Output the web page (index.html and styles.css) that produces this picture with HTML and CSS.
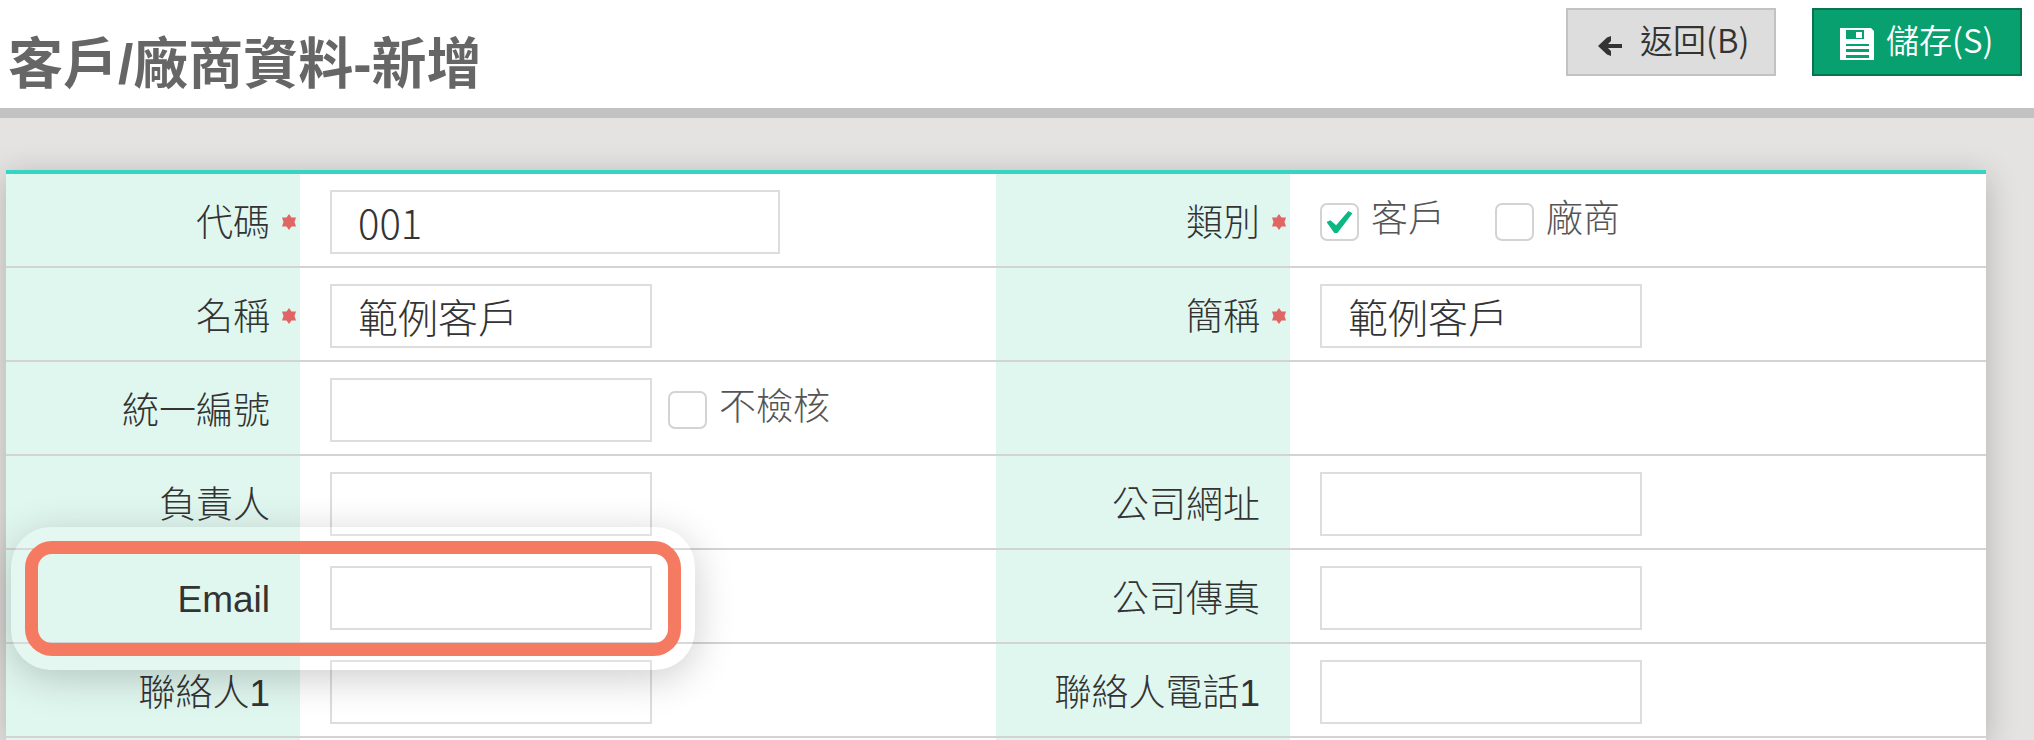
FILE: index.html
```html
<!DOCTYPE html>
<html lang="zh-Hant">
<head>
<meta charset="utf-8">
<meta name="viewport" content="width=device-width, initial-scale=1">
<title>客戶/廠商資料-新增</title>
<link rel="stylesheet" href="styles.css">
</head>
<body>
<svg class="defs" aria-hidden="true">
  <symbol id="star" viewBox="0 0 16 16"><path d="M8 0 10.500 3.500H15L13.500 8 15 12.500H10.500L8 16 5.500 12.500H1L2.500 8 1 3.500H5.500z" fill="currentColor"/></symbol>
</svg>
<header class="topbar">
  <h1 class="title">客戶/廠商資料-新增</h1>
  <div class="actions">
    <button type="button" class="btn btn-back">
      <svg class="icon-back" viewBox="0 0 24 20" aria-hidden="true"><path d="M0 10 9 1.500 13 0v5L10 8h14v4H10l3 3v5l-4-1.500z" fill="currentColor"/></svg>
      <span>返回(B)</span>
    </button>
    <button type="submit" form="customer" class="btn btn-save">
      <svg class="icon-save" viewBox="0 0 34 32" aria-hidden="true"><path fill="currentColor" fill-rule="evenodd" d="M0 0h31l3 3v29h-5V16H6v16H0zM6 2v9h18V2zM16 4h6v6h-6zM6 18h23v3H6zM6 24h23v3H6zM6 30h23v2H6z"/></svg>
      <span>儲存(S)</span>
    </button>
  </div>
</header>
<form class="panel" id="customer">
  <table class="fields">
    <colgroup><col class="col-label"><col><col class="col-label"><col></colgroup>
    <tbody>
      <tr>
        <th><div class="label"><label for="code">代碼</label><span class="mark"><svg><use href="#star"/></svg></span></div></th>
        <td><div class="cell"><input class="text wide" id="code" type="text" value="001"></div></td>
        <th><div class="label"><span>類別</span><span class="mark"><svg><use href="#star"/></svg></span></div></th>
        <td><div class="cell kinds"><label class="check"><input type="checkbox" checked><span>客戶</span></label><label class="check"><input type="checkbox"><span>廠商</span></label></div></td>
      </tr>
      <tr>
        <th><div class="label"><label for="name">名稱</label><span class="mark"><svg><use href="#star"/></svg></span></div></th>
        <td><div class="cell"><input class="text" id="name" type="text" value="範例客戶"></div></td>
        <th><div class="label"><label for="short">簡稱</label><span class="mark"><svg><use href="#star"/></svg></span></div></th>
        <td><div class="cell"><input class="text" id="short" type="text" value="範例客戶"></div></td>
      </tr>
      <tr>
        <th><div class="label"><label for="taxid">統一編號</label><span class="mark"></span></div></th>
        <td><div class="cell"><input class="text" id="taxid" type="text"><label class="check"><input type="checkbox"><span>不檢核</span></label></div></td>
        <th></th>
        <td></td>
      </tr>
      <tr>
        <th><div class="label"><label for="owner">負責人</label><span class="mark"></span></div></th>
        <td><div class="cell"><input class="text" id="owner" type="text"></div></td>
        <th><div class="label"><label for="site">公司網址</label><span class="mark"></span></div></th>
        <td><div class="cell"><input class="text" id="site" type="text"></div></td>
      </tr>
      <tr>
        <th class="anchor"><div class="label"><label for="email">Email</label><span class="mark"></span></div><div class="spotlight"></div></th>
        <td><div class="cell"><input class="text" id="email" type="email"></div></td>
        <th><div class="label"><label for="fax">公司傳真</label><span class="mark"></span></div></th>
        <td><div class="cell"><input class="text" id="fax" type="text"></div></td>
      </tr>
      <tr>
        <th><div class="label"><label for="contact">聯絡人1</label><span class="mark"></span></div></th>
        <td><div class="cell"><input class="text" id="contact" type="text"></div></td>
        <th><div class="label"><label for="phone">聯絡人電話1</label><span class="mark"></span></div></th>
        <td><div class="cell"><input class="text" id="phone" type="text"></div></td>
      </tr>
      <tr class="tail"><th></th><td></td><th></th><td></td></tr>
    </tbody>
  </table>
</form>
</body>
</html>
```
FILE: styles.css
```css
* { box-sizing: border-box; }

body {
  margin: 0;
  min-height: 100vh;
  overflow: hidden;
  background: #e4e3e1;
  color: #333;
  font-family: "Liberation Sans", "Noto Sans CJK TC", sans-serif;
}

.defs { display: none; }

.topbar {
  display: flex;
  justify-content: space-between;
  align-items: flex-start;
  height: 118px;
  padding: 8px 12px 0 8px;
  background: #fff;
  border-bottom: 10px solid #c2c2c2;
}

.title {
  margin: 16px 0 0;
  font-size: 55px;
  line-height: 80px;
  font-weight: 700;
  color: #666;
}

.actions { display: flex; gap: 36px; }

.btn {
  display: flex;
  align-items: center;
  width: 210px;
  height: 68px;
  padding: 0 0 0 30px;
  border: 2px solid #c2c2c2;
  background: #ddd;
  color: #333;
  font-family: "Noto Sans CJK TC", sans-serif;
  font-size: 33px;
  font-weight: 350;
  line-height: 60px;
}

.btn span { padding-bottom: 6px; }

.btn-back { gap: 18px; }

.btn-save {
  gap: 12px;
  padding-left: 26px;
  border-color: #08734f;
  background: #09a06f;
  color: #fff;
}

.icon-back { width: 24px; height: 20px; margin-top: 8px; }
.icon-save { width: 34px; height: 32px; margin-top: 4px; }

.panel {
  margin: 52px 48px 0 6px;
  border-top: 4px solid #35d5c3;
  background: #fff;
  box-shadow: 0 6px 30px rgba(0, 0, 0, .22);
}

.fields {
  width: 100%;
  table-layout: fixed;
  border-collapse: separate;
  border-spacing: 0;
}

.col-label { width: 294px; }

th, td {
  height: 94px;
  padding: 4px 0 0;
  border-bottom: 2px solid #d3d3d3;
}

th {
  background: #e0f7ef;
  font-weight: 300;
}

.tail th, .tail td { height: 2px; padding: 0; border: 0; }

.label {
  display: flex;
  align-items: center;
  justify-content: flex-end;
  font-size: 37px;
  line-height: 56px;
}

.label > :first-child { padding-top: 4px; }

.mark { display: flex; width: 30px; padding-left: 11px; color: #e06666; }
.mark svg { width: 16px; height: 16px; }

.cell { display: flex; align-items: center; gap: 16px; padding: 0 30px; }

.kinds { gap: 50px; }

.text {
  width: 322px;
  height: 64px;
  padding: 0 26px;
  border: 2px solid #ddd;
  background: transparent;
  color: #333;
  font-family: "Noto Sans CJK TC", sans-serif;
  font-size: 40px;
  font-weight: 300;
}

.wide { width: 450px; }

.check {
  display: flex;
  align-items: center;
  gap: 12px;
  color: #555;
  font-size: 37px;
  line-height: 50px;
  font-weight: 300;
}

.check span { padding-bottom: 4px; }

.check input {
  appearance: none;
  display: grid;
  place-items: center;
  width: 39px;
  height: 38px;
  margin: 0;
  border: 2px solid #d3d3d3;
  border-radius: 7px;
  background: #fff;
}

.check input:checked::before {
  content: "";
  width: 26px;
  height: 22px;
  background: #0bb783;
  clip-path: polygon(0 50%, 15% 42%, 37% 65%, 84% 0, 100% 10%, 42% 100%, 30% 100%);
}

.anchor { position: relative; }

/* Callout ring drawn over the Email row */
.spotlight {
  position: absolute;
  z-index: 1;
  top: -23px;
  bottom: -28px;
  left: 5px;
  width: 684px;
  border: 14px solid rgba(255, 255, 255, .15);
  border-radius: 40px;
  box-shadow: 0 8px 40px rgba(0, 0, 0, .2);
  pointer-events: none;
}

.spotlight::before {
  content: "";
  position: absolute;
  inset: 0;
  border: 13px solid #f57a62;
  border-radius: 27px;
}
```
